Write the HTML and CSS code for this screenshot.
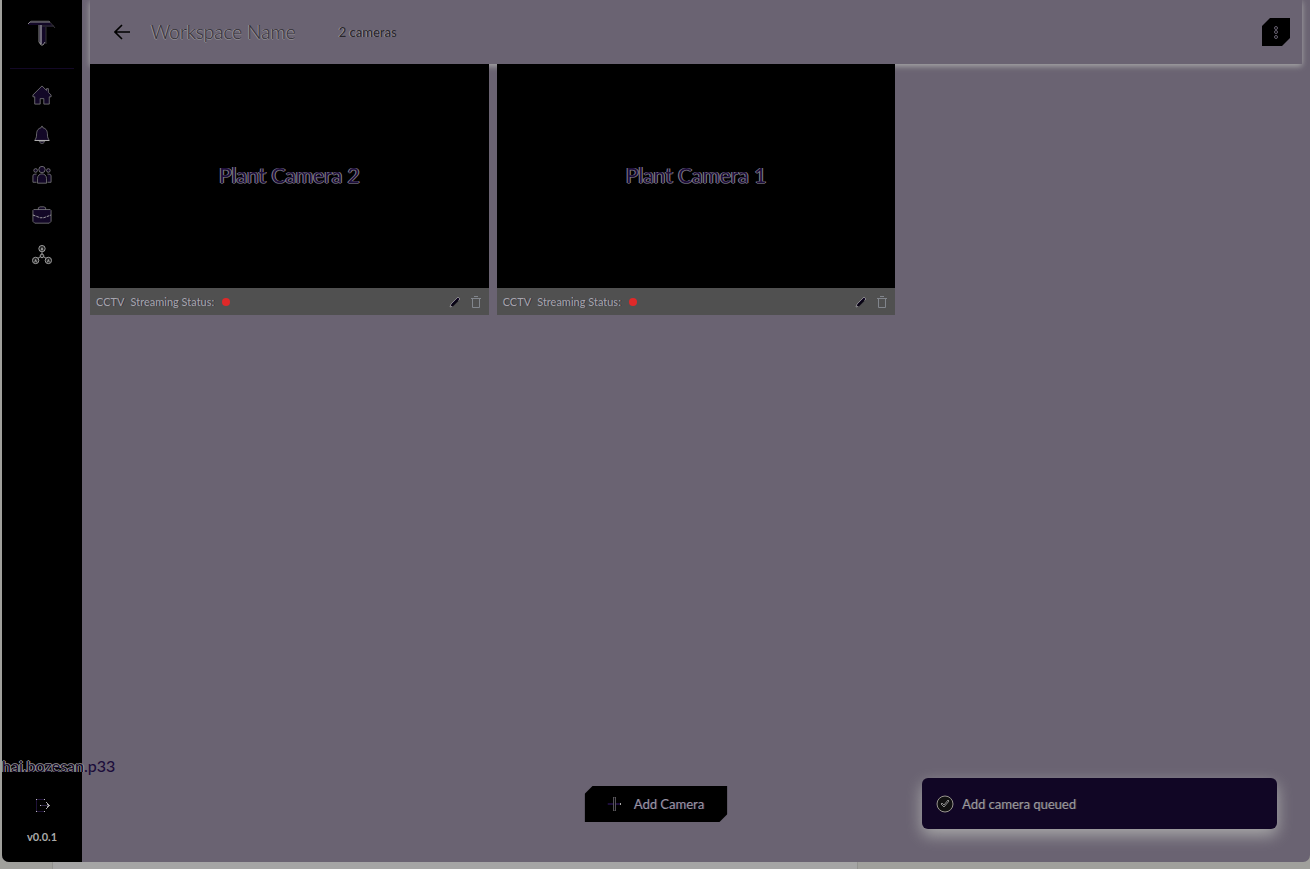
FILE: index.html
```
<!DOCTYPE html>
<html lang="en">
  <head>
    <meta charset="utf-8">
    <title>Workspace Name</title>
    <link rel="stylesheet" href="styles.css">
  </head>
<body>
  <div class="window">
    <!--Left navigation bar-->
    <nav class="sidebar">
      <a class="logo" href="#" aria-label="Home page">
        <svg width="30" height="30" viewBox="0 0 30 30">
          <path d="M3 3h19l6 6h-9v16l-4 2-3-3V7H1z" fill="#130827"/>
          <path d="M1 6l3-3h18l6 7M15 8h12M19 9v17" fill="none" stroke="#333"/>
          <path d="M1 6l2-2h20M12 7v17l2 3h2l2-3" fill="none" stroke="#888"/>
          <path d="M14 7v19" stroke="#ccc"/>
        </svg>
      </a>
      <div class="links">
        <a href="#" aria-label="Home">
          <svg width="20" height="20" viewBox="0 0 22 22"><path class="solid" d="M11 1L1 11v2h2v8h6v-6h4v6h6v-8h2v-2l-3-3V4h-2v2z"/></svg>
        </a>
        <a href="#" aria-label="Notifications">
          <svg width="20" height="20" viewBox="0 0 22 22"><path class="solid" d="M11 1l1 2c4 1 5 4 5 8 0 3 1 4 2 6H3c1-2 2-3 2-6 0-4 1-7 5-8zM8 18h6c-1 3-5 3-6 0z"/><path d="M3 17h16" stroke="#bbb"/></svg>
        </a>
        <a href="#" aria-label="Users">
          <svg width="20" height="20" viewBox="0 0 22 22">
            <circle class="solid" cx="11" cy="5" r="3.500"/><circle class="solid" cx="4" cy="6" r="2"/><circle class="solid" cx="18" cy="6" r="2"/>
            <path class="solid" d="M6 20v-5c0-7 10-7 10 0v5zM5 19H1v-7c0-2 2-2 4-2M17 19h4v-7c0-2-2-2-4-2"/>
          </svg>
        </a>
        <a href="#" aria-label="Workspaces">
          <svg width="20" height="20" viewBox="0 0 22 22">
            <path class="solid" d="M7 5V3l2-1h4l2 1v2M2 5h18l1 1v12l-2 2H3l-2-2V6z"/>
            <path d="M1 11l8 3h4l8-3" fill="none" stroke="#aaa" stroke-dasharray="3 1"/>
          </svg>
        </a>
        <a href="#" aria-label="Network">
          <svg width="20" height="20" viewBox="0 0 22 22" fill="#222" stroke="#aaa">
            <path d="M11 8v3M9 13l-3 2M13 13l3 2"/>
            <circle cx="11" cy="4" r="3.500"/><circle cx="4" cy="17" r="3.500"/><circle cx="18" cy="17" r="3.500"/><circle cx="11" cy="12" r="2"/>
            <path d="M10 6l1-3 1 3M3 19l1-3 1 3M17 19l1-3 1 3"/>
          </svg>
        </a>
      </div>
      <div class="account">
        <div class="user"><span class="outlined">hai.bozesan</span>.p33</div>
        <button class="logout" aria-label="Log out">
          <svg width="16" height="16" viewBox="0 0 16 16" fill="none" shape-rendering="crispEdges">
            <path d="M10.500 2.500h-8v12h8" stroke="#1f1238"/>
            <path d="M6 8.500h8" stroke="#332b48"/><path d="M12 5l3 3.500-3 3.500" stroke="#aaa"/>
            <path d="M2 2.500h1M10 2.500h1M2 14.500h1M10 14.500h1M6 8.500h1" stroke="#bbb"/>
          </svg>
        </button>
        <div class="version">v0.0.1</div>
      </div>
    </nav>

    <main class="main">
      <header class="header">
        <button class="back" aria-label="Back">
          <svg width="17" height="16" viewBox="0 0 17 16" fill="none" stroke="#000" stroke-width="1.600"><path d="M16 8H2M8 1L1 8l7 7"/></svg>
        </button>
        <h1>Workspace Name</h1>
        <span class="count">2 cameras</span>
        <button class="menu" aria-label="Menu">
          <svg width="6" height="14" viewBox="0 0 6 14" fill="none" stroke="#666070"><circle cx="3" cy="3" r="1.500"/><circle cx="3" cy="7" r="1.500"/><circle cx="3" cy="12" r="1.500"/></svg>
        </button>
      </header>
      <!--Camera tiles-->
      <section class="cameras">
        <article>
          <div class="video">Plant Camera 2</div>
          <div class="info">
            <span class="kind">CCTV</span><span>Streaming Status:</span><i class="dot"></i>
            <button class="edit" aria-label="Edit camera"><svg width="12" height="12" viewBox="0 0 12 12"><path d="M1 11l1-3 7-7 2 2-7 7z" fill="#130827" stroke="#999" stroke-width=".8"/><path d="M3 10l6-6" stroke="#080411" stroke-width="2"/></svg></button>
            <button class="delete" aria-label="Delete camera"><svg width="10" height="14" viewBox="0 0 10 14" fill="none" stroke="#81858c"><path d="M0 3.500h10M3 1.500h4M1.500 3.500v9h7v-9"/></svg></button>
          </div>
        </article>
        <article>
          <div class="video">Plant Camera 1</div>
          <div class="info">
            <span class="kind">CCTV</span><span>Streaming Status:</span><i class="dot"></i>
            <button class="edit" aria-label="Edit camera"><svg width="12" height="12" viewBox="0 0 12 12"><path d="M1 11l1-3 7-7 2 2-7 7z" fill="#130827" stroke="#999" stroke-width=".8"/><path d="M3 10l6-6" stroke="#080411" stroke-width="2"/></svg></button>
            <button class="delete" aria-label="Delete camera"><svg width="10" height="14" viewBox="0 0 10 14" fill="none" stroke="#81858c"><path d="M0 3.500h10M3 1.500h4M1.500 3.500v9h7v-9"/></svg></button>
          </div>
        </article>
      </section>
    </main>

    <button class="add">
      <svg width="14" height="14" viewBox="0 0 14 14"><path d="M0 7h13" stroke="#1c0d3a" stroke-width="2"/><path d="M6 0h2v14H6z" fill="#08040f" stroke="#777" stroke-width=".7"/><path d="M13 6v2" stroke="#aaa"/></svg>
      Add Camera
    </button>
    <div class="toast" role="status">
      <svg width="18" height="18" viewBox="0 0 18 18"><circle cx="9" cy="9" r="8" fill="#111" stroke="#99958f"/><path d="M5 9l3 3 5-6-1-1-4 5-2-2z" fill="#111" stroke="#aaa" stroke-width=".8"/></svg>
      Add camera queued
    </div>
  </div>
  <div class="shelf"></div>
</body>
</html>
```
FILE: styles.css
```
* {
  box-sizing: border-box;
}
body {
  margin: 0;
  height: 100vh;
  display: flex;
  flex-direction: column;
  background-color: #a0a09c;
  font-family: Lato, "Open Sans", sans-serif;
  font-size: 12px;
}
button {
  display: flex;
  align-items: center;
  justify-content: center;
  padding: 0;
  border: 0;
  background: none;
  font-family: inherit;
}
svg {
  display: block;
  flex: none;
}
.window {
  position: relative;
  flex: 1;
  display: flex;
  margin-left: 2px;
  overflow: hidden;
  border-radius: 0 0 7px 7px;
  background-color: #6a6372;
}
.sidebar {
  width: 80px;
  flex: none;
  display: flex;
  flex-direction: column;
  align-items: center;
  background-color: #000;
}
.logo {
  width: 64px;
  height: 69px;
  display: flex;
  justify-content: center;
  padding-top: 18px;
  border-bottom: 1px solid #130827;
}
.links {
  display: flex;
  flex-direction: column;
  gap: 20px;
  padding-top: 16px;
}
.solid {
  fill: #130827;
  stroke: #888;
  stroke-width: .8;
}
.account {
  width: 100%;
  margin-top: auto;
  display: flex;
  flex-direction: column;
  align-items: center;
  padding-bottom: 17px;
}
.user {
  width: 100%;
  white-space: nowrap;
  color: #1c0d3a;
  font-size: 16px;
  font-weight: 500;
  line-height: 20px;
  padding-bottom: 2px;
}
.outlined {
  color: #130827;
  text-shadow: 1px 0 #999, -1px 0 #999, 0 -1px #777;
}
.logout {
  margin: 19px 0 16px;
}
.version {
  color: #aaa;
  font-size: 11px;
  font-weight: bold;
  line-height: 16px;
}
.main {
  flex: 1;
  min-width: 0;
  padding: 0 8px;
}
.header {
  height: 64px;
  display: flex;
  align-items: center;
  padding: 0 12px 0 24px;
  box-shadow: 0 2px 6px #aaa;
}
h1 {
  margin: 0 43px 0 20px;
  padding-bottom: 2px;
  color: #302d34;
  font-size: 19px;
  font-weight: 300;
  text-shadow: -1px 0 #98959a, 0 1px #8b888e;
}
.count {
  color: #29262c;
  font-size: 13px;
  text-shadow: -1px 0 #98959a;
}
.menu {
  width: 28px;
  height: 28px;
  margin-left: auto;
  background-color: #000;
  clip-path: polygon(8px 0, 100% 0, 100% 20px, 20px 100%, 0 100%, 0 8px);
}
.cameras {
  display: grid;
  grid-template-columns: repeat(3, 1fr);
  gap: 8px;
}
.video {
  aspect-ratio: 16 / 9;
  display: flex;
  align-items: center;
  justify-content: center;
  padding-bottom: 4px;
  background-color: #000;
  color: #1c0d3a;
  font-size: 21px;
  text-shadow: -1px 0 #85818c, 1px 0 #85818c, 0 1px #55515c;
}
.info {
  height: 27px;
  display: flex;
  align-items: center;
  padding: 0 8px 0 6px;
  background-color: #505050;
  color: #a6a5ad;
  font-size: 11px;
  text-shadow: 1px 0 #343040;
}
.kind {
  margin-right: 6px;
}
.dot {
  width: 8px;
  height: 8px;
  margin-left: 8px;
  border-radius: 50%;
  background-color: #df2929;
}
.edit {
  margin-left: auto;
}
.delete {
  margin-left: 10px;
}
.add {
  position: absolute;
  left: 50%;
  bottom: 40px;
  width: 143px;
  height: 36px;
  gap: 12px;
  transform: translateX(-50%);
  background-color: #000;
  clip-path: polygon(8px 0, 100% 0, 100% 28px, 135px 100%, 0 100%, 0 8px);
  color: #9a97a2;
  font-size: 13px;
  text-shadow: 1px 0 #2a1f40;
}
.toast {
  position: absolute;
  right: 33px;
  bottom: 33px;
  width: 355px;
  height: 51px;
  display: flex;
  align-items: center;
  gap: 8px;
  padding: 0 14px;
  border-radius: 6px;
  background-color: #110625;
  box-shadow: 0 6px 16px #aaa;
  color: #9c999f;
  font-size: 13px;
  text-shadow: 1px 0 #3c3840;
}
.shelf {
  height: 7px;
  margin: 0 452px 0 52px;
  border: solid #92928f;
  border-width: 0 1px;
  background-color: #a5a5a5;
}
```
